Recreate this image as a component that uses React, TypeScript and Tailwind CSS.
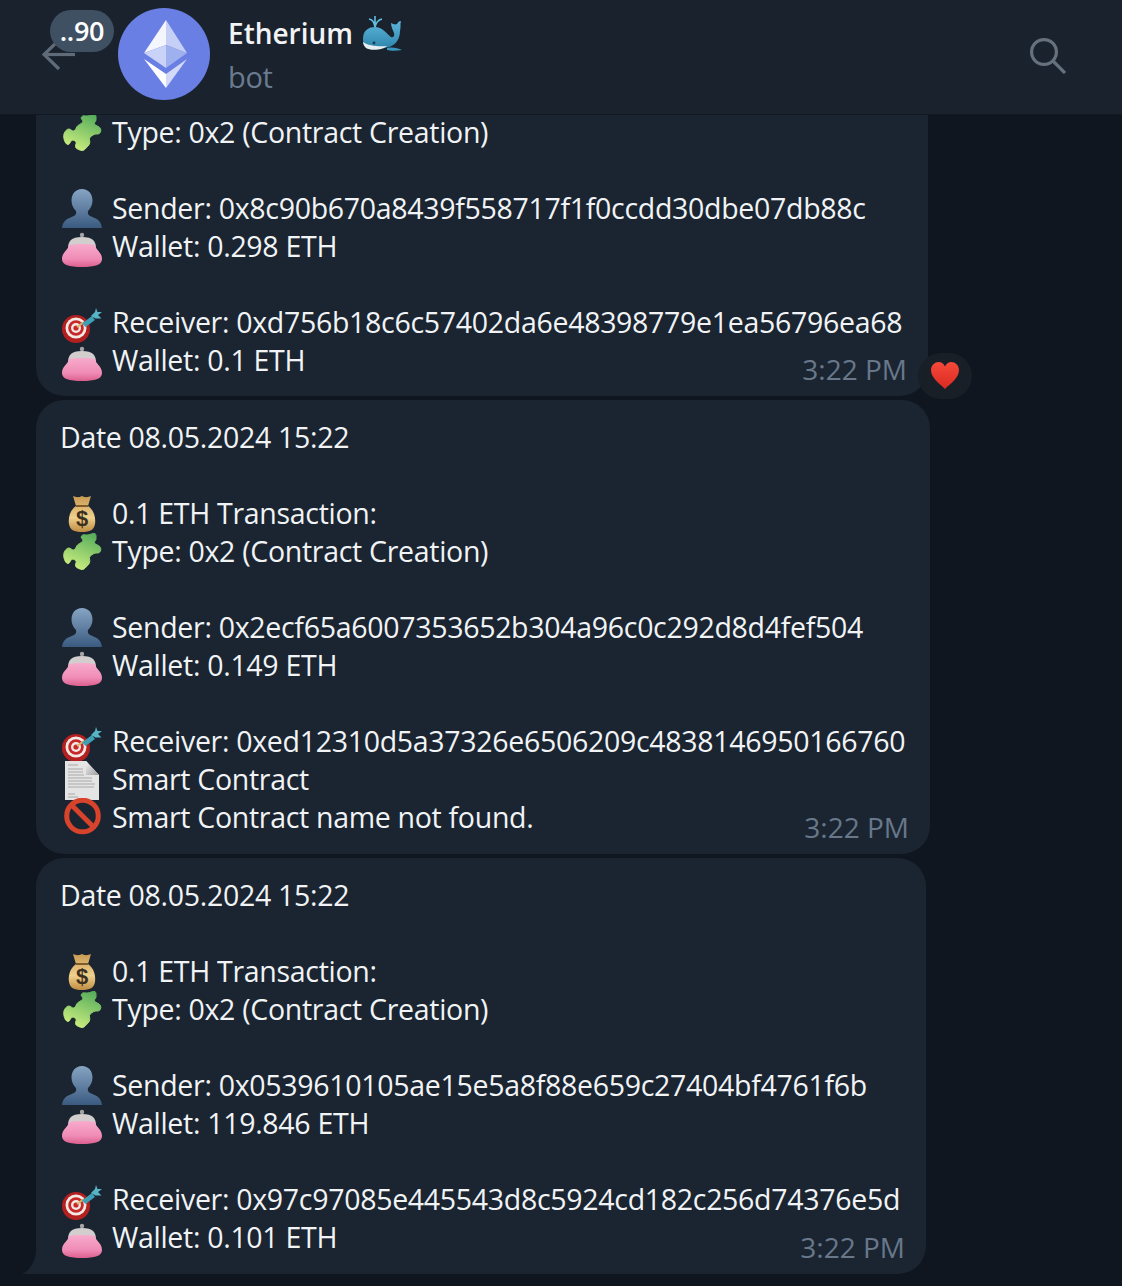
import React from 'react';

const bodyFont = 'font-["Open_Sans",sans-serif]';

const Bust = () => (
  <svg viewBox="0 0 40 40" className="w-full h-full">
    <defs>
      <linearGradient id="bustG" x1="0" y1="0" x2="0" y2="1">
        <stop offset="0" stopColor="#86a5c4" />
        <stop offset="1" stopColor="#3b5a80" />
      </linearGradient>
    </defs>
    <path
      d="M20 0 C26.5 0 30.5 5 30.5 11.5 C30.5 16 28.5 19.5 26 22 C25.5 24 26 26 28 27 C33 29.5 39 30 40 39 L0 39 C1 30 7 29.5 12 27 C14 26 14.5 24 14 22 C11.5 19.5 9.5 16 9.5 11.5 C9.5 5 13.5 0 20 0 Z"
      fill="url(#bustG)"
    />
  </svg>
);

const Purse = () => (
  <svg viewBox="0 0 40 40" className="w-full h-full">
    <defs>
      <linearGradient id="purseG" x1="0" y1="0" x2="0" y2="1">
        <stop offset="0" stopColor="#f7abcd" />
        <stop offset="0.65" stopColor="#f08cb6" />
        <stop offset="1" stopColor="#dc5f8e" />
      </linearGradient>
    </defs>
    <circle cx="20" cy="8" r="2.2" fill="#a5a5a5" />
    <path d="M6 22 C6 14 9 10 20 10 C31 10 34 14 34 22 Z" fill="#d2cece" />
    <path
      d="M7 18 C12 16.5 28 16.5 33 18 C33.5 23 40 25 40 32 C40 38 33 40 20 40 C7 40 0 38 0 32 C0 25 6.5 23 7 18 Z"
      fill="url(#purseG)"
    />
  </svg>
);

const Target = () => (
  <svg viewBox="0 0 40 40" className="w-full h-full">
    <circle cx="14" cy="26" r="14" fill="#b3201f" />
    <circle cx="14" cy="25" r="10.5" fill="#f3e9e4" />
    <circle cx="14" cy="25" r="7.8" fill="#c8282a" />
    <circle cx="14" cy="25" r="5" fill="#f3e9e4" />
    <circle cx="14" cy="25" r="2.6" fill="#c8282a" />
    <path d="M15 24 L22 19" stroke="#d9b46a" strokeWidth="2" />
    <path d="M20 20.5 L30 13 L33 17 L23.5 24 Z" fill="#3f9fb4" />
    <path d="M29 13 L33 9 L34 5 L35.5 9 L40 9 L36 12 L39.5 15.5 L33.5 15.5 Z" fill="#57b5c6" />
  </svg>
);

const MoneyBag = () => (
  <svg viewBox="0 0 40 40" className="w-full h-full">
    <defs>
      <linearGradient id="bagG" x1="0" y1="0" x2="0" y2="1">
        <stop offset="0" stopColor="#c99a52" />
        <stop offset="0.6" stopColor="#efd08c" />
        <stop offset="1" stopColor="#bf8c43" />
      </linearGradient>
    </defs>
    <path
      d="M11 2 C14 3 16 4 20 2 C24 4 26 3 29 2 L26 12 C32 16 34 24 33 30 C32 36 28 38 20 38 C12 38 8 36 7 30 C6 24 8 16 14 12 Z"
      fill="url(#bagG)"
    />
    <path d="M14 12 L26 12" stroke="#7d5a28" strokeWidth="2" />
    <text x="20" y="32" textAnchor="middle" fontSize="22" fontWeight="700" fontFamily="Liberation Sans, sans-serif" fill="#3d2f1e">
      $
    </text>
  </svg>
);

const Puzzle = () => (
  <svg viewBox="0 0 40 40" className="w-full h-full">
    <defs>
      <linearGradient id="puzzG" gradientUnits="userSpaceOnUse" x1="28" y1="1" x2="12" y2="38">
        <stop offset="0" stopColor="#58ad5c" />
        <stop offset="1" stopColor="#cff180" />
      </linearGradient>
    </defs>
    <path
      d="M2 21 C3 18 5 16 7 16 C9 16 10 18.5 12 18 C14 17 14 14 16 12.5 C18 11 21 10 21 8 C20 6 18.5 6 19.5 4 C21 2 23 3 25 3 C28 3 30 1 33 1.5 C34.5 3 34 5 34 7 C34 9 31.5 9.5 32.5 11 C34 13 37 13 38.5 15.5 C39.5 18 38 21 36 21 C34 21 32.5 21 31 22 C28.5 23.5 27 25 27.5 27 C28 29 28 31 26 33 C24 35 22 38 20 37.5 C17 37 13.5 35.5 13.5 33.5 C13.5 31 15 30 13.5 28.5 C12 27 10 26.5 9 28 C8 30 7 32 5.5 31.5 C3 30.5 1 25 2 21 Z"
      fill="url(#puzzG)"
      stroke="url(#puzzG)"
      strokeWidth="1"
      strokeLinejoin="round"
    />
  </svg>
);

const Doc = () => (
  <svg viewBox="0 0 40 40" className="w-full h-full">
    <defs>
      <linearGradient id="foldG" x1="0" y1="0" x2="1" y2="1">
        <stop offset="0" stopColor="#f4f4f4" />
        <stop offset="1" stopColor="#9a9a9a" />
      </linearGradient>
    </defs>
    <path d="M3 1 L24 1 L37 15 L37 40 L3 40 Z" fill="#e4e4e4" />
    <path d="M24 1 L37 15 L24 15 Z" fill="url(#foldG)" />
    <g stroke="#a8a8a8" strokeWidth="1">
      <path d="M6 5 H16" />
      <path d="M6 9 H21" />
      <path d="M6 12 H21" />
      <path d="M6 15 H22" />
      <path d="M6 18 H30" />
      <path d="M6 21 H30" />
      <path d="M6 24 H33" />
      <path d="M6 27 H32" />
      <path d="M6 34 H13" />
      <path d="M6 37 H16" />
    </g>
  </svg>
);

const NoEntry = () => (
  <svg viewBox="0 0 40 40" className="w-full h-full">
    <circle cx="20.5" cy="18" r="15.8" fill="none" stroke="#d8432b" strokeWidth="5" />
    <path d="M9 6.5 L32 29.5" stroke="#d8432b" strokeWidth="5" />
  </svg>
);

const Whale = () => (
  <svg viewBox="0 0 40 40" className="w-full h-full">
    <defs>
      <linearGradient id="whaleG" x1="0" y1="0" x2="0" y2="1">
        <stop offset="0" stopColor="#5db6da" />
        <stop offset="1" stopColor="#2f86ad" />
      </linearGradient>
    </defs>
    <path d="M13 14 C12 9 11 7 7 6 M13 14 C13 8 13 5 13 3 M13 14 C14 9 16 7 20 6" stroke="#63bfe0" strokeWidth="1.6" fill="none" />
    <path
      d="M1 26 C1 17 7 14 13 14 C20 14 24 20 29 24 C31 25 33 23 32 20 C31 17 29 14 29 10 C31 11 33 12 35 11 C36 9 37 8 39 8 C38 11 39 14 38 18 C38 27 33 34 22 35 L6 35 C3 34 1 31 1 26 Z"
      fill="url(#whaleG)"
    />
    <path d="M1 29 C6 33 18 34 25 33 C22 37 8 38 4 35 C2 33 1 31 1 29 Z" fill="#e6eef2" />
    <circle cx="12" cy="30" r="1.4" fill="#1e3a4d" />
    <path d="M25 35 C30 34 36 35 40 37 C35 38 28 38 25 37 Z" fill="#3a95bb" />
  </svg>
);

const EthLogo = () => (
  <svg viewBox="0 0 92 92" className="w-[92px] h-[92px] shrink-0">
    <circle cx="46" cy="46" r="46" fill="#6a7fe3" />
    <path d="M48 12 L26 45 L48 37 Z" fill="#f4f6fe" />
    <path d="M48 12 L69 45 L48 37 Z" fill="#c6cff6" />
    <path d="M26 45 L48 60 L48 37 Z" fill="#c9d2f7" />
    <path d="M69 45 L48 60 L48 37 Z" fill="#9fb0ee" />
    <path d="M26 51 L48 80 L48 66 Z" fill="#ffffff" />
    <path d="M69 51 L48 80 L48 66 Z" fill="#d3daf8" />
  </svg>
);

const Heart = () => (
  <svg viewBox="0 0 28 28" className="w-[28px] h-[28px]">
    <defs>
      <linearGradient id="heartG" x1="0" y1="0" x2="0" y2="1">
        <stop offset="0" stopColor="#f5493a" />
        <stop offset="1" stopColor="#d92a22" />
      </linearGradient>
    </defs>
    <path
      d="M14 27 C9 22 0 16 0 8 C0 3 4 0 7.5 0 C10.5 0 13 2 14 4.5 C15 2 17.5 0 20.5 0 C24 0 28 3 28 8 C28 16 19 22 14 27 Z"
      fill="url(#heartG)"
    />
  </svg>
);

const Row = ({ icon, children }: { icon?: React.ReactNode; children?: React.ReactNode }) => (
  <div className="flex items-center h-[38px] whitespace-nowrap">
    {icon && <span className="w-[40px] h-[40px] ml-[2px] mr-[10px] shrink-0">{icon}</span>}
    {children && <span className="pb-[2px]">{children}</span>}
  </div>
);

const Time = ({ className }: { className: string }) => (
  <span className={`absolute text-[#68778a] text-[28px] tracking-normal leading-[38px] ${className}`}>3:22 PM</span>
);

const App = () => {
  return (
    <div className={`w-[1122px] h-[1286px] overflow-hidden flex flex-col bg-[#0f161f] text-[#f1f3f5] text-[28.5px] tracking-[-0.3px] ${bodyFont}`}>
      <header className="h-[115px] shrink-0 flex items-center pb-[6px] bg-[#1a222d] border-b border-[#121922] relative z-10">
        <svg viewBox="0 0 34 32" className="w-[34px] h-[32px] ml-[42px] mr-[42px] mt-[2px] shrink-0" fill="none" stroke="#5f6b78" strokeWidth="3.2">
          <path d="M33 15.5 H2" />
          <path d="M17 1 L2 15.5 L17 30" />
        </svg>
        <span className="absolute left-[50px] top-[10px] w-[64px] h-[42px] rounded-full bg-[#3f5063] flex items-center justify-center text-white text-[27px] font-semibold">
          ..90
        </span>
        <EthLogo />
        <div className="ml-[18px] mt-[2px] flex flex-col">
          <div className="flex items-center h-[44px]">
            <span className="font-semibold text-[28px] tracking-normal">Etherium</span>
            <span className="w-[40px] h-[40px] ml-[9px]"><Whale /></span>
          </div>
          <span className="text-[#6b7b8f] text-[29px] leading-[44px]">bot</span>
        </div>
        <svg viewBox="0 0 36 36" className="w-[36px] h-[36px] ml-auto mr-[56px] mt-[4px]" fill="none" stroke="#66717e" strokeWidth="3.2">
          <circle cx="14" cy="14" r="12.4" />
          <path d="M23 23 L35 35" />
        </svg>
      </header>

      <main className="flex-1 pl-[36px] flex flex-col gap-[4px] items-start">
        <section className="w-[892px] h-[281px] relative bg-[#1a2531] rounded-b-[28px] pl-[24px]">
          <div className="-mt-[1px]">
            <Row icon={<Puzzle />}>Type: 0x2 (Contract Creation)</Row>
            <Row />
            <Row icon={<Bust />}>Sender: 0x8c90b670a8439f558717f1f0ccdd30dbe07db88c</Row>
            <Row icon={<Purse />}>Wallet: 0.298 ETH</Row>
            <Row />
            <Row icon={<Target />}>Receiver: 0xd756b18c6c57402da6e48398779e1ea56796ea68</Row>
            <Row icon={<Purse />}>Wallet: 0.1 ETH</Row>
          </div>
          <Time className="right-[21px] bottom-[8px]" />
          <span className="absolute left-[882px] top-[238px] w-[54px] h-[46px] rounded-full bg-[#191f27] flex items-center justify-center">
            <Heart />
          </span>
        </section>

        <section className="w-[894px] h-[454px] relative bg-[#1a2531] rounded-[28px] pl-[24px] pt-[19px]">
          <Row>Date 08.05.2024 15:22</Row>
          <Row />
          <Row icon={<MoneyBag />}>0.1 ETH Transaction:</Row>
          <Row icon={<Puzzle />}>Type: 0x2 (Contract Creation)</Row>
          <Row />
          <Row icon={<Bust />}>Sender: 0x2ecf65a6007353652b304a96c0c292d8d4fef504</Row>
          <Row icon={<Purse />}>Wallet: 0.149 ETH</Row>
          <Row />
          <Row icon={<Target />}>Receiver: 0xed12310d5a37326e6506209c4838146950166760</Row>
          <Row icon={<Doc />}>Smart Contract</Row>
          <Row icon={<NoEntry />}>Smart Contract name not found.</Row>
          <Time className="right-[21px] bottom-[8px]" />
        </section>

        <section className="w-[890px] h-[416px] relative bg-[#1a2531] rounded-[28px] rounded-bl-none pl-[24px] pt-[19px]">
          <Row>Date 08.05.2024 15:22</Row>
          <Row />
          <Row icon={<MoneyBag />}>0.1 ETH Transaction:</Row>
          <Row icon={<Puzzle />}>Type: 0x2 (Contract Creation)</Row>
          <Row />
          <Row icon={<Bust />}>Sender: 0x0539610105ae15e5a8f88e659c27404bf4761f6b</Row>
          <Row icon={<Purse />}>Wallet: 119.846 ETH</Row>
          <Row />
          <Row icon={<Target />}>Receiver: 0x97c97085e445543d8c5924cd182c256d74376e5d</Row>
          <Row icon={<Purse />}>Wallet: 0.101 ETH</Row>
          <Time className="right-[21px] bottom-[8px]" />
          <svg viewBox="0 0 14 24" className="absolute -left-[14px] bottom-0 w-[14px] h-[24px]">
            <path d="M14 0 C14 10 8 21 0 24 L14 24 Z" fill="#1a2531" />
          </svg>
        </section>
      </main>
    </div>
  );
};

export default App;
